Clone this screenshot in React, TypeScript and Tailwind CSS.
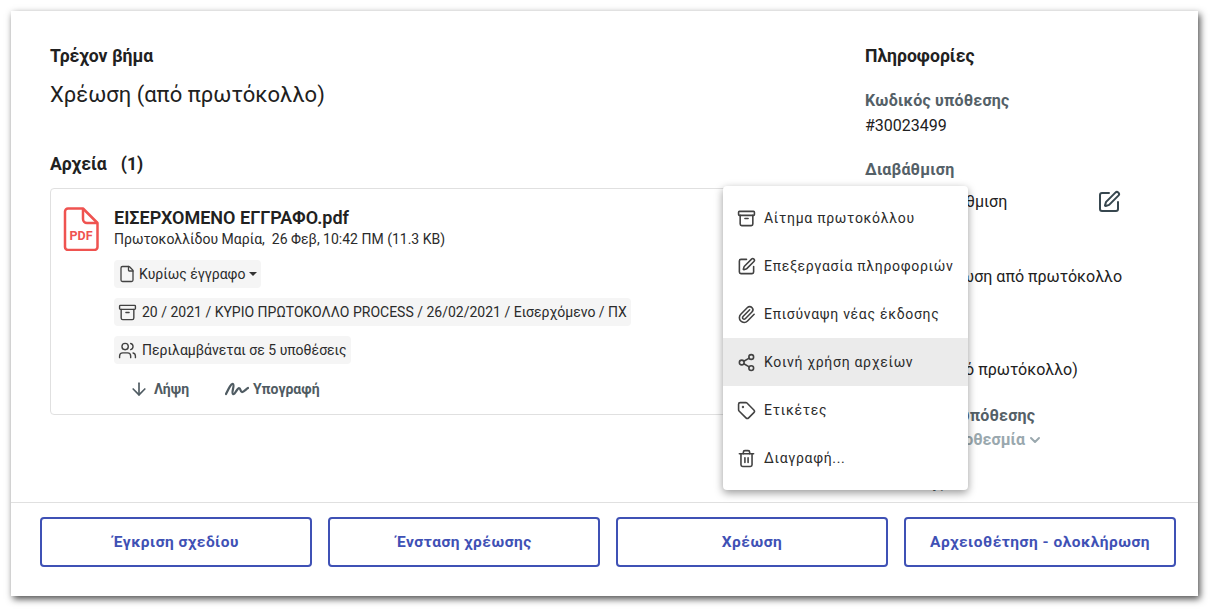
import { Archive, ArrowDown, ChevronDown, File, Paperclip, Share2, SquarePen, Tag, Trash2, Users } from 'lucide-react';
import type { ReactNode } from 'react';

const menuItems = [
  { label: 'Αίτημα πρωτοκόλλου', icon: Archive },
  { label: 'Επεξεργασία πληροφοριών', icon: SquarePen },
  { label: 'Επισύναψη νέας έκδοσης', icon: Paperclip },
  { label: 'Κοινή χρήση αρχείων', icon: Share2, active: true },
  { label: 'Ετικέτες', icon: Tag },
  { label: 'Διαγραφή...', icon: Trash2 },
];

const actions = ['Έγκριση σχεδίου', 'Ένσταση χρέωσης', 'Χρέωση', 'Αρχειοθέτηση - ολοκλήρωση'];

function PdfIcon() {
  return (
    <div className="relative w-9 h-11 shrink-0">
      <svg viewBox="0 0 36 44" className="w-9 h-11" fill="none" stroke="#ef5350" strokeWidth="2.5" strokeLinejoin="round">
        <path d="M5 1.5h15l14.5 14.5v24a3 3 0 0 1-3 3H5a3 3 0 0 1-3-3V4.500a3 3 0 0 1 3-3z" />
        <path d="M20 1.500v10.500a4 4 0 0 0 4 4h10.500" />
      </svg>
      <span className="absolute left-0 right-0 top-[22px] text-center text-[12.5px] leading-[14px] font-bold text-[#ef5350]">PDF</span>
    </div>
  );
}

function Chip({ children }: { children: ReactNode }) {
  return <div className="flex items-center h-7 w-fit rounded bg-[#f5f5f5] px-1 text-sm text-[#2b2b2b]">{children}</div>;
}

function SignatureIcon() {
  return (
    <svg viewBox="0 0 24 16" className="w-6 h-4" fill="none" stroke="#4f5b62" strokeWidth="2.25" strokeLinecap="round" strokeLinejoin="round">
      <path d="M1 13C3 9 6 2 8 3C10 4 6 12 8 13C10 14 12 7 14 7C16 7 15 11 17 11C19 11 21 8 23 7" />
    </svg>
  );
}

function InfoBlock({ label, value, className }: { label: string; value?: ReactNode; className: string }) {
  return (
    <div className={className}>
      <div className="text-base leading-5 font-bold tracking-[0.2px] text-[#546067]">{label}</div>
      {value}
    </div>
  );
}

export default function App() {
  return (
    <div className="h-[615px] bg-white pt-[11px] pl-[11px] pr-[19px] font-['Roboto',sans-serif] text-[#212121]">
      <div className="relative flex h-[585px] flex-col bg-white shadow-[2px_3px_7px_rgba(0,0,0,0.7)]">
        <div className="flex flex-1">
          <div className="w-[854px] pl-[39px] pt-[35px]">
            <h3 className="text-[17.6px] leading-5 font-bold">Τρέχον βήμα</h3>
            <p className="mt-[15px] text-[22px] leading-7">Χρέωση (από πρωτόκολλο)</p>
            <h3 className="mt-[45px] text-[17.6px] leading-5 font-bold">
              Αρχεία<span className="ml-[14px]">(1)</span>
            </h3>
            <div className="mt-[14px] flex w-[780px] h-[227px] gap-[15px] rounded border border-[#e0e0e0] pl-[12px] pt-[18px]">
              <PdfIcon />
              <div>
                <div className="text-lg leading-[22px] font-semibold">ΕΙΣΕΡΧΟΜΕΝΟ ΕΓΓΡΑΦΟ.pdf</div>
                <div className="text-sm leading-5 text-[#2b2b2b]">Πρωτοκολλίδου Μαρία,&nbsp; 26 Φεβ, 10:42 ΠΜ (11.3 KB)</div>
                <div className="mt-[11px] flex flex-col gap-[10px]">
                  <Chip>
                    <File size={18} strokeWidth={1.75} className="mr-[3px] text-[#424242]" />
                    Κυρίως έγγραφο
                    <span className="ml-[4px] h-0 w-0 border-x-4 border-t-4 border-x-transparent border-t-[#333333]" />
                  </Chip>
                  <Chip>
                    <Archive size={19} strokeWidth={1.75} className="mr-[5px] text-[#424242]" />
                    20 / 2021 / ΚΥΡΙΟ ΠΡΩΤΟΚΟΛΛΟ PROCESS / 26/02/2021 / Εισερχόμενο / ΠΧ
                  </Chip>
                  <Chip>
                    <Users size={19} strokeWidth={1.75} className="mr-[5px] text-[#424242]" />
                    Περιλαμβάνεται σε 5 υποθέσεις
                  </Chip>
                </div>
                <div className="mt-[15px] flex items-center pl-[15px] text-sm font-bold text-[#4f5b62]">
                  <ArrowDown size={20} strokeWidth={2} className="mr-[5px]" />
                  Λήψη
                  <span className="ml-[36px] mr-[4px]"><SignatureIcon /></span>
                  Υπογραφή
                </div>
              </div>
            </div>
          </div>
          <div className="flex-1 pt-[35px] text-base">
            <h3 className="text-[17.6px] leading-5 font-bold">Πληροφορίες</h3>
            <InfoBlock
              label="Κωδικός υπόθεσης"
              className="mt-[25px]"
              value={<div className="mt-[5px] text-base leading-5">#30023499</div>}
            />
            <InfoBlock
              label="Διαβάθμιση"
              className="mt-[24px]"
              value={
                <div className="mt-[10px] flex items-center justify-between w-[256px] leading-5">
                  Γενικής διαβάθμιση
                  <SquarePen size={24} strokeWidth={2} className="text-[#37474f]" />
                </div>
              }
            />
            <InfoBlock
              label="Διαδικασία"
              className="mt-[21px]"
              value={<div className="mt-[12px] leading-5">Διαδοχή&nbsp; χρέωση από πρωτόκολλο</div>}
            />
            <InfoBlock
              label="Βήμα"
              className="mt-[43px]"
              value={<div className="mt-[10px] leading-5">1 Χρέωση (από πρωτόκολλο)</div>}
            />
            <InfoBlock
              label="Ημερομηνία υπόθεσης"
              className="mt-[26px]"
              value={
                <div className="mt-[4px] flex items-center text-base leading-5 font-bold text-[#9aa8ae]">
                  Χωρίς νέα προθεσμία
                  <ChevronDown size={16} strokeWidth={3} className="ml-[2px]" />
                </div>
              }
            />
            <InfoBlock label="Συντάκτης" className="mt-[23px]" />
          </div>
        </div>
        <div className="flex gap-4 border-t border-[#e0e0e0] pl-[29px] pt-[14px] pb-[29px]">
          {actions.map((action) => (
            <button
              key={action}
              className="h-[50px] w-[272px] rounded border-2 border-[#3f51b5] pt-[1px] text-[15.5px] font-bold tracking-[0.5px] text-[#3f51b5]"
            >
              {action}
            </button>
          ))}
        </div>
        <div className="absolute left-[712px] top-[175px] w-[245px] rounded-sm bg-white py-2 shadow-[0_3px_8px_rgba(0,0,0,0.4)]">
          {menuItems.map((item) => (
            <div
              key={item.label}
              className={`flex h-[48px] items-center gap-[8px] pl-[14px] text-sm tracking-[0.7px] text-[#2b2b2b] ${item.active ? 'bg-[#ebebeb]' : ''}`}
            >
              <item.icon size={19} strokeWidth={2} className="text-[#424242]" />
              {item.label}
            </div>
          ))}
        </div>
      </div>
    </div>
  );
}
